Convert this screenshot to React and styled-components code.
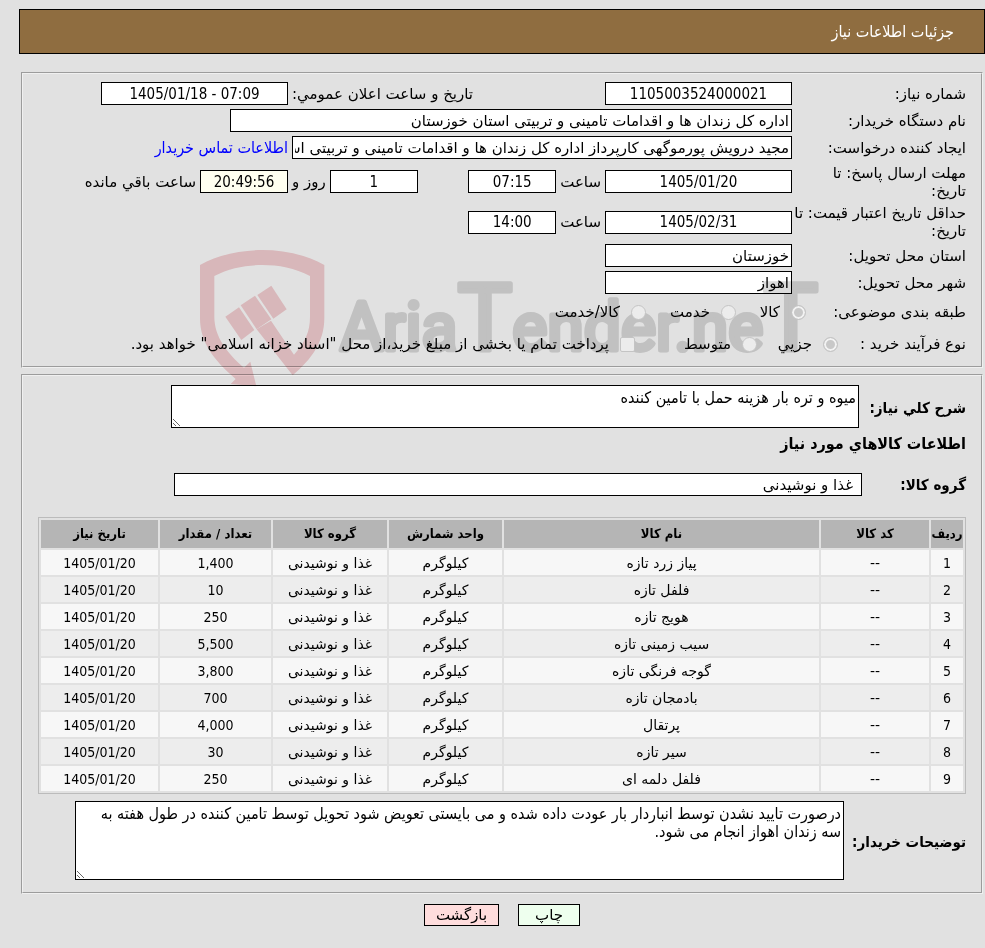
import React from "react";
import styled, { createGlobalStyle } from "styled-components";

const items = [
  { name: "پیاز زرد تازه", amount: "1,400" },
  { name: "فلفل تازه", amount: "10" },
  { name: "هویج تازه", amount: "250" },
  { name: "سیب زمینی تازه", amount: "5,500" },
  { name: "گوجه فرنگی تازه", amount: "3,800" },
  { name: "بادمجان تازه", amount: "700" },
  { name: "پرتقال", amount: "4,000" },
  { name: "سیر تازه", amount: "30" },
  { name: "فلفل دلمه ای", amount: "250" },
];

const Watermark = () => (
  <WatermarkLayer aria-hidden="true">
    <WatermarkSvg width="605" height="137" viewBox="0 0 605 137">
      <g fill="#f5d0d3" transform="scale(0.3333)">
        <path d="M0 45 C55 14 125 0 187 0 C250 0 318 14 373 45 V205 C373 275 335 328 278 376 L170 238 L213 212 L282 314 C316 276 330 245 330 200 V78 C285 54 235 45 187 45 C140 45 88 54 43 78 V200 C43 260 82 310 132 353 L151 335 L169 409 L92 402 L107 387 C40 330 0 275 0 205 Z" />
        <path d="M76 200 L117 172 L163 240 L124 270 Z" />
        <path d="M122 166 L165 137 L214 208 L170 238 Z" />
        <path d="M172 135 L214 107 L260 178 L220 206 Z" />
      </g>
      <WatermarkText x="140" y="100">
        Aria<BigLetter>T</BigLetter>ender.ne<BigLetter>T</BigLetter>
      </WatermarkText>
    </WatermarkSvg>
  </WatermarkLayer>
);

const App = () => {
  return (
    <Page dir="rtl">
      <GlobalStyle />
      <Header>
        <Title>جزئیات اطلاعات نیاز</Title>
      </Header>

      <Content>
        <Panel>
          <FormRow>
            <Label htmlFor="needNo">شماره نیاز:</Label>
            <NumberField id="needNo" readOnly value="1105003524000021" />
            <Middle $end>
              <Label htmlFor="announce">تاریخ و ساعت اعلان عمومي:</Label>
            </Middle>
            <Rest>
              <NumberField id="announce" dir="ltr" readOnly value="1405/01/18 - 07:09" />
            </Rest>
          </FormRow>
          <FormRow>
            <Label htmlFor="buyer">نام دستگاه خریدار:</Label>
            <Wide>
              <Field
                id="buyer"
                $width={562}
                readOnly
                value="اداره کل زندان ها و اقدامات تامینی و تربیتی استان خوزستان"
              />
            </Wide>
          </FormRow>
          <FormRow>
            <Label htmlFor="creator">ایجاد کننده درخواست:</Label>
            <Wide>
              <Field
                id="creator"
                $width={500}
                readOnly
                value="مجید درویش پورموگهی کارپرداز اداره کل زندان ها و اقدامات تامینی و تربیتی استان خوزستان"
              />
              <ContactLink href="#contact">اطلاعات تماس خریدار</ContactLink>
            </Wide>
          </FormRow>
          <FormRow $height={41}>
            <Label htmlFor="replyDate">
              مهلت ارسال پاسخ: تا
              <br />
              تاریخ:
            </Label>
            <NumberField id="replyDate" dir="ltr" readOnly value="1405/01/20" />
            <Middle>
              <Pair>
                <Label htmlFor="replyTime">ساعت</Label>
                <NumberField id="replyTime" $width={88} readOnly value="07:15" />
              </Pair>
              <Pair>
                <NumberField id="days" $width={88} readOnly value="1" />
                <Label htmlFor="days">روز و</Label>
              </Pair>
            </Middle>
            <Rest>
              <NumberField id="remain" $width={88} $timer readOnly value="20:49:56" />
              <Label htmlFor="remain">ساعت باقي مانده</Label>
            </Rest>
          </FormRow>
          <FormRow $height={40}>
            <Label htmlFor="priceDate">
              حداقل تاریخ اعتبار قیمت: تا
              <br />
              تاریخ:
            </Label>
            <NumberField id="priceDate" dir="ltr" readOnly value="1405/02/31" />
            <Middle>
              <Pair>
                <Label htmlFor="priceTime">ساعت</Label>
                <NumberField id="priceTime" $width={88} readOnly value="14:00" />
              </Pair>
            </Middle>
          </FormRow>
          <FormRow>
            <Label htmlFor="province">استان محل تحویل:</Label>
            <Field id="province" readOnly value="خوزستان" />
          </FormRow>
          <FormRow>
            <Label htmlFor="city">شهر محل تحویل:</Label>
            <Field id="city" readOnly value="اهواز" />
          </FormRow>
          <OptionRow $labelWidth={160}>
            <span>طبقه بندی موضوعی:</span>
            <Option $width={70}>
              <Tick type="radio" name="category" disabled defaultChecked />
              کالا
            </Option>
            <Option $width={90}>
              <Tick type="radio" name="category" disabled />
              خدمت
            </Option>
            <Option>
              <Tick type="radio" name="category" disabled />
              کالا/خدمت
            </Option>
          </OptionRow>
          <OptionRow $labelWidth={128}>
            <span>نوع فرآیند خرید :</span>
            <Option $width={81}>
              <Tick type="radio" name="process" disabled defaultChecked />
              جزيي
            </Option>
            <Option $width={122}>
              <Tick type="radio" name="process" disabled />
              متوسط
            </Option>
            <Option>
              <Tick type="checkbox" disabled />
              پرداخت تمام یا بخشی از مبلغ خرید،از محل "اسناد خزانه اسلامی" خواهد بود.
            </Option>
          </OptionRow>
          <Watermark />
        </Panel>

        <Panel>
          <DetailRow>
            <BoldLabel htmlFor="summary" $width={103}>شرح کلي نیاز:</BoldLabel>
            <Area id="summary" $height={43} $width={688} readOnly value="میوه و تره بار هزینه حمل با تامین کننده" />
          </DetailRow>
          <SectionTitle>اطلاعات کالاهاي مورد نیاز</SectionTitle>
          <DetailRow>
            <BoldLabel htmlFor="group" $width={100}>گروه کالا:</BoldLabel>
            <Field id="group" $width={688} $inset readOnly value="غذا و نوشیدنی" />
          </DetailRow>
          <Table>
            <colgroup>
              <Col $width={32} />
              <Col $width={108} />
              <Col />
              <Col $width={113} />
              <Col $width={114} />
              <Col $width={111} />
              <Col $width={117} />
            </colgroup>
            <thead>
              <tr>
                <Th>ردیف</Th>
                <Th>کد کالا</Th>
                <Th>نام کالا</Th>
                <Th>واحد شمارش</Th>
                <Th>گروه کالا</Th>
                <Th>تعداد / مقدار</Th>
                <Th>تاریخ نیاز</Th>
              </tr>
            </thead>
            <tbody>
              {items.map((item, index) => (
                <Tr key={item.name}>
                  <NumberTd>{index + 1}</NumberTd>
                  <Td>--</Td>
                  <Td>{item.name}</Td>
                  <Td>کیلوگرم</Td>
                  <Td>غذا و نوشیدنی</Td>
                  <NumberTd>{item.amount}</NumberTd>
                  <NumberTd dir="ltr">1405/01/20</NumberTd>
                </Tr>
              ))}
            </tbody>
          </Table>
          <DetailRow>
            <BoldLabel htmlFor="notes" $width={118}>توضیحات خریدار:</BoldLabel>
            <Area
              id="notes"
              $height={79}
              $width={769}
              readOnly
              value={
                "درصورت تایید نشدن توسط انباردار بار عودت داده شده و می بایستی تعویض شود تحویل توسط تامین کننده در طول هفته به\nسه زندان اهواز انجام می شود."
              }
            />
          </DetailRow>
        </Panel>
      </Content>

      <ButtonContainer>
        <PrintButton type="button">چاپ</PrintButton>
        <BackButton type="button">بازگشت</BackButton>
      </ButtonContainer>
    </Page>
  );
};

const condensed = `Tahoma, "DejaVu Sans Condensed", "DejaVu Sans", sans-serif`;

const GlobalStyle = createGlobalStyle`
  * {
    box-sizing: border-box;
  }

  body {
    margin: 0;
    background-color: #e1e1e1;
  }

  body, input, textarea, button {
    font-family: Tahoma, "DejaVu Sans", sans-serif;
    font-size: 15px;
    line-height: 18px;
    color: black;
  }
`;

const Page = styled.main`
  padding: 9px 0 22px 19px;
`;

const Header = styled.header`
  display: flex;
  align-items: center;
  height: 45px;
  padding: 0 30px;
  background-color: #8f6d40;
  border: 1px solid black;
`;

const Title = styled.h1`
  margin: 0;
  font-family: ${condensed};
  font-size: 16px;
  font-weight: normal;
  color: white;
`;

const Content = styled.div`
  display: flex;
  flex-direction: column;
  gap: 6px;
  padding: 18px 2px 0;
`;

const Panel = styled.section`
  position: relative;
  padding: 6px 15px;
  border: 2px groove #f0f0f0;
`;

const FormRow = styled.div`
  display: grid;
  grid-template-columns: 170px 187px 309px 1fr;
  column-gap: 4px;
  align-items: center;
  min-height: ${(props) => props.$height || 27}px;
`;

const Label = styled.label`
  white-space: nowrap;
`;

const Field = styled.input`
  width: ${(props) => props.$width || 187}px;
  height: 23px;
  padding: 0 ${(props) => (props.$inset ? 8 : 2)}px;
  background-color: white;
  border: 1px solid black;
`;

const NumberField = styled(Field)`
  background-color: ${(props) => (props.$timer ? "#fffff0" : "white")};
  font-family: ${condensed};
  text-align: center;
`;

const Wide = styled.div`
  grid-column: 2 / -1;
  display: flex;
  align-items: center;
  gap: 4px;
`;

const Middle = styled.div`
  display: flex;
  align-items: center;
  justify-content: ${(props) => (props.$end ? "flex-end" : "space-between")};
`;

const Pair = styled.div`
  display: flex;
  align-items: center;
  gap: 4px;
`;

const Rest = styled(Pair)``;

const ContactLink = styled.a`
  color: blue;
  font-family: ${condensed};
  font-size: 16px;
  text-decoration: none;
  white-space: nowrap;
`;

const OptionRow = styled.div`
  display: grid;
  grid-template-columns: ${(props) => props.$labelWidth}px auto auto auto;
  justify-content: start;
  align-items: center;
  min-height: 32px;
`;

const Option = styled.label`
  display: flex;
  align-items: center;
  gap: 11px;
  width: ${(props) => (props.$width ? `${props.$width}px` : "auto")};
  white-space: nowrap;
`;

const Tick = styled.input`
  appearance: none;
  position: relative;
  z-index: 2;
  flex: none;
  width: 15px;
  height: 15px;
  margin: 0;
  background-color: #ececec;
  border: 1px solid #c4c4c4;
  border-radius: ${(props) => (props.type === "radio" ? "50%" : "2px")};

  &:checked {
    background-color: #c8c8c8;
    box-shadow: inset 0 0 0 2px #f2f2f2;
  }
`;

const WatermarkLayer = styled.div`
  position: absolute;
  top: 176px;
  left: 0;
  right: 0;
  z-index: 1;
  display: flex;
  justify-content: center;
  pointer-events: none;
  mix-blend-mode: multiply;
`;

const WatermarkSvg = styled.svg`
  direction: ltr;
  overflow: visible;
`;

const WatermarkText = styled.text`
  fill: #dbdbdb;
  stroke: #dbdbdb;
  stroke-width: 5px;
  stroke-linejoin: round;
  font-family: Roboto, sans-serif;
  font-size: 66px;
`;

const BigLetter = styled.tspan`
  font-size: 92px;
`;

const DetailRow = styled.div`
  display: flex;
  align-items: center;
  gap: 4px;
`;

const BoldLabel = styled.label`
  flex: none;
  width: ${(props) => props.$width}px;
  font-family: ${condensed};
  font-weight: bold;
  white-space: nowrap;
`;

const Area = styled.textarea`
  width: ${(props) => props.$width}px;
  height: ${(props) => props.$height}px;
  margin: 3px 0 6px;
  padding: 3px 2px;
  border: 1px solid black;
  font-family: ${condensed};
  font-size: 16px;
`;

const SectionTitle = styled.h2`
  margin: 1px 0 20px;
  font-family: ${condensed};
  font-size: 16px;
  font-weight: bold;
`;

const Table = styled.table`
  width: 100%;
  margin: 21px 0 4px;
  table-layout: fixed;
  border: 1px solid #bbb;
  border-spacing: 2px;
  font-size: 14px;
  text-align: center;
`;

const Col = styled.col`
  width: ${(props) => (props.$width ? `${props.$width}px` : "auto")};
`;

const Th = styled.th`
  height: 28px;
  padding: 0;
  background-color: #b5b5b5;
  font-family: ${condensed};
  font-size: 13px;
  white-space: nowrap;
`;

const Tr = styled.tr`
  background-color: #ededed;

  &:nth-child(odd) {
    background-color: #f7f7f7;
  }
`;

const Td = styled.td`
  height: 25px;
  padding: 0;
`;

const NumberTd = styled(Td)`
  font-family: ${condensed};
`;

const ButtonContainer = styled.div`
  display: flex;
  justify-content: center;
  gap: 19px;
  margin-top: 10px;
`;

const ActionButton = styled.button`
  height: 22px;
  padding: 0;
  border: 1px solid black;
`;

const PrintButton = styled(ActionButton)`
  width: 62px;
  background-color: #eeffee;
`;

const BackButton = styled(ActionButton)`
  width: 75px;
  background-color: #ffdddd;
`;

export default App;
